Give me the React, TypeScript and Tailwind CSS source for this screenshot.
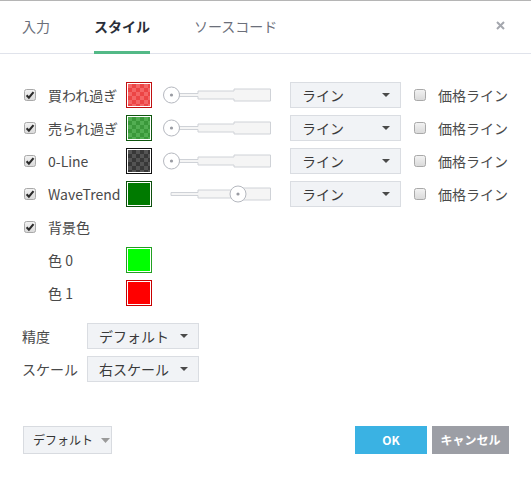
import React from "react";

const Check = ({ checked }: { checked: boolean }) => (
  <svg width="12" height="12" viewBox="0 0 12 12" className="shrink-0">
    <defs>
      <linearGradient id="cbg" x1="0" y1="0" x2="0" y2="1">
        <stop offset="0" stopColor="#f3f3f3" />
        <stop offset="1" stopColor="#d9d9d9" />
      </linearGradient>
    </defs>
    <rect x="0.5" y="0.5" width="11" height="11" rx="2" fill="url(#cbg)" stroke="#a9a9a9" />
    {checked && (
      <path d="M2.6 6.3 L4.9 8.7 L9.5 3.1" fill="none" stroke="#2b2b2b" strokeWidth="2.1" />
    )}
  </svg>
);

const Swatch = ({ border, fill }: { border: string; fill: string }) => (
  <div className={`w-[26px] h-[26px] border bg-white p-px shrink-0 ${border}`}>
    <div className={`w-full h-full ${fill}`} />
  </div>
);

const Slider = ({ atEnd }: { atEnd: boolean }) => {
  const x0 = atEnd ? 8 : 16;
  const cx = atEnd ? 75 : 8.5;
  return (
    <svg width="108" height="26" viewBox="0 0 108 26" className="shrink-0">
      <polygon
        points={`${x0},11.5 35,11.5 35,9 71,9 71,7 107.5,7 107.5,19 71,19 71,17 35,17 35,14.5 ${x0},14.5`}
        fill="#f5f5f5"
        stroke="#cfd2d7"
      />
      <circle cx={cx} cy="13" r="8" fill="#fff" stroke="#b5b8bf" />
      <circle cx={cx} cy="13" r="1.6" fill="#9a9ca3" />
    </svg>
  );
};

const Caret = () => (
  <svg width="8" height="4" viewBox="0 0 8 4" className="shrink-0">
    <path d="M0 0 L8 0 L4 4 Z" fill="#4a4a4a" />
  </svg>
);

const Select = ({ label, w }: { label: string; w: string }) => (
  <div
    className={`h-[26px] ${w} shrink-0 flex items-center justify-between pl-[11px] pr-[10px] bg-[#f1f3f6] border border-[#dadde2] text-[14px] text-[#3a3a3a] whitespace-nowrap`}
  >
    <span>{label}</span>
    <Caret />
  </div>
);

const rows = [
  {
    label: "買われ過ぎ",
    border: "border-[#c01010]",
    fill: "bg-[image:conic-gradient(#ec4545_25%,#f46666_0_50%,#ec4545_0_75%,#f46666_0)] bg-[length:8px_8px]",
    atEnd: false,
  },
  {
    label: "売られ過ぎ",
    border: "border-[#0e560e]",
    fill: "bg-[image:conic-gradient(#3a983a_25%,#52ae52_0_50%,#3a983a_0_75%,#52ae52_0)] bg-[length:8px_8px]",
    atEnd: false,
  },
  {
    label: "0-Line",
    border: "border-[#111111]",
    fill: "bg-[image:conic-gradient(#383838_25%,#545454_0_50%,#383838_0_75%,#545454_0)] bg-[length:8px_8px]",
    atEnd: false,
  },
  {
    label: "WaveTrend",
    border: "border-[#0c4f0c]",
    fill: "bg-[#007a00]",
    atEnd: true,
  },
];

export default function App() {
  return (
    <div className="w-[531px] h-[477px] bg-white border-t border-[#b5b5b5] flex flex-col font-['Noto_Sans_CJK_JP','Noto_Sans',sans-serif] text-[#4a4a4a] overflow-hidden">
      {/* header */}
      <div className="h-[53px] shrink-0 flex items-stretch border-b border-[#e0e3eb] pl-[22px] pr-[26px]">
        <div className="flex items-stretch gap-[44px] text-[14px]">
          <div className="flex items-center pb-[2px] text-[#6b6f7a]">入力</div>
          <div className="flex items-center pb-[0px] border-b-[3px] border-[#53b987] -mb-px font-bold text-[#2a2e39]">
            スタイル
          </div>
          <div className="flex items-center pb-[2px] text-[#6b6f7a]">ソースコード</div>
        </div>
        <div className="ml-auto flex items-center pb-[4px]">
          <svg width="9" height="9" viewBox="0 0 9 9">
            <path d="M1 1 L8 8 M8 1 L1 8" stroke="#a4a7ae" strokeWidth="2" />
          </svg>
        </div>
      </div>

      {/* body */}
      <div className="flex flex-col pt-[28px] pl-[24px] text-[14px]">
        <div className="flex flex-col gap-[7px]">
          {rows.map((r) => (
            <div key={r.label} className="h-[26px] flex items-center whitespace-nowrap">
              <div className="w-[24px] flex items-center">
                <Check checked />
              </div>
              <div className="w-[78px] text-[#4a4a4a]">{r.label}</div>
              <Swatch border={r.border} fill={r.fill} />
              <div className="ml-[11px]">
                <Slider atEnd={r.atEnd} />
              </div>
              <div className="ml-[19px]">
                <Select label="ライン" w="w-[111px]" />
              </div>
              <div className="ml-[13px] flex items-center">
                <Check checked={false} />
              </div>
              <div className="ml-[12px]">価格ライン</div>
            </div>
          ))}
          <div className="h-[26px] flex items-center">
            <div className="w-[24px] flex items-center">
              <Check checked />
            </div>
            <div>背景色</div>
          </div>
          <div className="h-[26px] flex items-center">
            <div className="w-[24px]" />
            <div className="w-[78px]">色 0</div>
            <Swatch border="border-[#22a022]" fill="bg-[#00ff00]" />
          </div>
          <div className="h-[26px] flex items-center">
            <div className="w-[24px]" />
            <div className="w-[78px]">色 1</div>
            <Swatch border="border-[#c80000]" fill="bg-[#ff0000]" />
          </div>
        </div>

        <div className="flex flex-col gap-[7px] mt-[17px] -ml-[2px]">
          <div className="h-[26px] flex items-center">
            <div className="w-[65px]">精度</div>
            <Select label="デフォルト" w="w-[112px]" />
          </div>
          <div className="h-[26px] flex items-center">
            <div className="w-[65px]">スケール</div>
            <Select label="右スケール" w="w-[112px]" />
          </div>
        </div>
      </div>

      {/* footer */}
      <div className="mt-auto flex items-center pl-[23px] pr-[22px] pb-[23px]">
        <div className="h-[28px] w-[89px] flex items-center gap-[8px] pl-[9px] bg-[#f1f3f6] border border-[#d8dbe0] text-[12px] text-[#333] whitespace-nowrap">
          <span>デフォルト</span>
          <svg width="9" height="5" viewBox="0 0 9 5" className="shrink-0">
            <path d="M0 0 L9 0 L4.5 5 Z" fill="#9a9a9a" />
          </svg>
        </div>
        <div className="ml-auto flex gap-[5px]">
          <div className="h-[28px] w-[72px] flex items-center justify-center bg-[#3ab2e3] text-white font-bold text-[12px]">
            OK
          </div>
          <div className="h-[28px] w-[77px] flex items-center justify-center bg-[#9c9ea5] text-white font-bold text-[12px] whitespace-nowrap">
            キャンセル
          </div>
        </div>
      </div>
    </div>
  );
}
